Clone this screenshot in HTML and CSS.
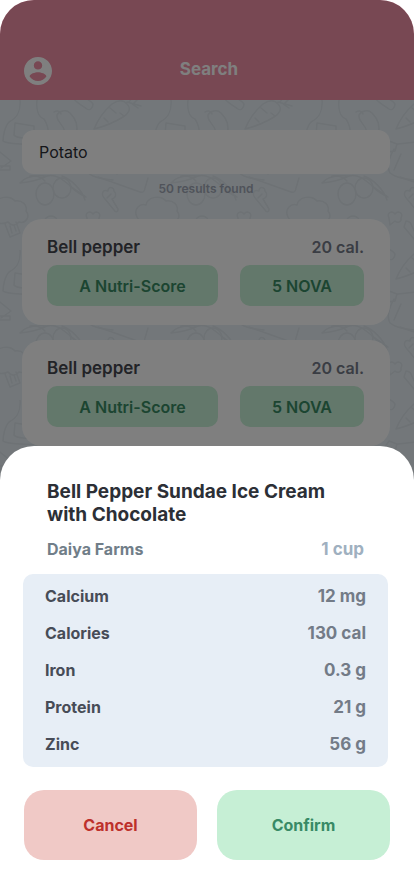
FILE: index.html
```html
<!DOCTYPE html>
<html lang="en">
<head>
<meta charset="utf-8">
<meta name="viewport" content="width=device-width, initial-scale=1">
<title>Search</title>
<link rel="stylesheet" href="styles.css">
</head>
<body>
<div class="screen">
  <header class="topbar">
    <a class="account" href="#" aria-label="Account">
      <svg viewBox="2 2 20 20" aria-hidden="true"><path fill="currentColor" d="M12 2C6.48 2 2 6.48 2 12s4.48 10 10 10 10-4.48 10-10S17.52 2 12 2zm0 3c1.66 0 3 1.34 3 3s-1.340 3-3 3-3-1.340-3-3 1.340-3 3-3zm0 14.200c-2.500 0-4.710-1.280-6-3.220.030-1.990 4-3.080 6-3.080 1.990 0 5.970 1.090 6 3.080-1.290 1.940-3.500 3.220-6 3.220z"/></svg>
    </a>
    <h1 class="title">Search</h1>
  </header>
  <main class="content">
    <svg class="doodles" aria-hidden="true">
      <defs>
        <pattern id="food" width="151" height="150" patternUnits="userSpaceOnUse">
          <g fill="none" stroke="#dce4ea" stroke-width="1.500" stroke-linecap="round" stroke-linejoin="round">
            <path d="M20 0c1 12-3 18-11 22-4 4-6 14-6 19 2 3 30 4 37 3 6 0 10-2 9-6-1-9-1-13-5-19-6-2-8-10-7-19M15 23l19 3v10c-2 4-18 2-20-1z"/>
            <path d="M54 12c3-2 6-1 7 2M57 15c2-4 9-6 13-2 6 6 9 12 6 21M57 15c-1 7 6 8 8 17"/>
            <path d="M72-4c2 6 10 9 15 13 3 2 6-1 6-5-2-4-8-5-11-9M72 146c2 6 10 9 15 13M93 154c-2-4-8-5-11-9"/>
            <path d="M94 29c5-12 11-19 18-25 6-4 11-5 15 0 5 5 1 10-4 13-8 5-17 9-29 12M110 8l6 5M104 18l4 4M120 13l4 3M127 2l14 4M129 2l4-5M134 3l5-5M132 4l6 4"/>
            <path d="M83 47l4-6 8 3-2 7-8 1zM92 49c-5 9-8 17-4 24 6 5 15 6 25 7M96 44l18-2M99 54l-7 16M113 44l4 30"/>
            <path d="M0 52l11 9-10 7M0 66h10v4H0M148 54l3-2M146 67h5"/>
            <path d="M20 83c5-7 16-8 27-7-8 4-17 6-27 7zM47 76c9-2 15 3 21 8 8 7 14 10 18 13-5-2-10-5-16-11M62 76c9 3 20 14 23 24M45 81c-5-5-10-6-15-5"/>
            <ellipse cx="45" cy="94" rx="9" ry="11"/><ellipse cx="62" cy="88" rx="9" ry="10"/>
            <path d="M98 77l42 15c3 1 5-1 5-4l3-10"/>
            <path d="M105 99c-5-5-2-10 3-8 0-5 6-4 6 0 3 3 2 7-2 8l6 10c0 4-3 3-4 1zM107 98l4-4"/>
            <path d="M-14 117c-4-8 3-14 9-12 2-9 15-10 20-4 7-1 13 4 11 10 5 6-1 13-7 11-4 5-9 3-11 0-7 3-13 1-15-3M5 124l5 13 10-4-4-11M10 126l2 7M14 125l2 6"/>
            <path d="M137 117c-4-8 3-14 9-12 2-9 15-10 20-4M137 117c3 6 10 5 14 3"/>
            <path d="M87 118c-3-5 3-8 6-4 3-4 9-1 6 4 1 5-4 5-6 3l-5 4zM104 121c7 0 5 8 12 16 2 4-2 5-4 2l-10-12z"/>
            <circle cx="51" cy="123" r="7"/>
          </g>
        </pattern>
      </defs>
      <rect width="100%" height="100%" fill="url(#food)"/>
    </svg>
    <form class="search">
      <input class="search-input" type="text" value="Potato" aria-label="Search food">
    </form>
    <p class="count">50 results found</p>
    <ul class="results">
      <li class="card">
        <div class="row"><span class="food">Bell pepper</span><span class="cal">20 cal.</span></div>
        <div class="badges"><span class="badge">A Nutri-Score</span><span class="badge">5 NOVA</span></div>
      </li>
      <li class="card">
        <div class="row"><span class="food">Bell pepper</span><span class="cal">20 cal.</span></div>
        <div class="badges"><span class="badge">A Nutri-Score</span><span class="badge">5 NOVA</span></div>
      </li>
    </ul>
  </main>
  <div class="scrim"></div>
  <section class="sheet" role="dialog" aria-labelledby="product">
    <h2 class="product" id="product">Bell Pepper Sundae Ice Cream with Chocolate</h2>
    <div class="row meta"><span class="brand">Daiya Farms</span><span class="serving">1 cup</span></div>
    <table class="facts">
      <tbody>
        <tr><th scope="row">Calcium</th><td>12 mg</td></tr>
        <tr><th scope="row">Calories</th><td>130 cal</td></tr>
        <tr><th scope="row">Iron</th><td>0.3 g</td></tr>
        <tr><th scope="row">Protein</th><td>21 g</td></tr>
        <tr><th scope="row">Zinc</th><td>56 g</td></tr>
      </tbody>
    </table>
    <div class="actions">
      <button class="btn cancel" type="button">Cancel</button>
      <button class="btn confirm" type="button">Confirm</button>
    </div>
  </section>
</div>
</body>
</html>
```
FILE: styles.css
```css
* { box-sizing: border-box; }

body {
  margin: 0;
  background: #fff;
  font-family: Inter, "Liberation Sans", sans-serif;
  font-size: 16px;
  line-height: 24px;
}

h1, h2, p, ul { margin: 0; padding: 0; }

.screen {
  position: relative;
  display: flex;
  flex-direction: column;
  min-height: 100vh;
  overflow: hidden;
  border-radius: 34px 34px 0 0;
}

.topbar {
  display: grid;
  grid-template-columns: 28px 1fr 28px;
  align-items: start;
  height: 100px;
  padding: 57px 24px 0;
  background: #f090a6;
  color: #fff;
}

.account { height: 28px; color: inherit; }
.account svg { display: block; width: 28px; height: 28px; }

.title {
  padding-left: 4px;
  font-size: 17px;
  line-height: 24px;
  font-weight: 700;
  text-align: center;
}

.content {
  position: relative;
  flex: 1;
  padding: 30px 24px 0 22px;
  background: #e6eff5;
}

.doodles {
  position: absolute;
  inset: 0;
  width: 100%;
  height: 100%;
}

.search, .count, .results { position: relative; }

.search-input {
  display: block;
  width: 100%;
  height: 44px;
  padding: 0 17px;
  border: 0;
  border-radius: 12px;
  background: #fff;
  color: #2c2f36;
  font: inherit;
}

.count {
  padding: 5px 0 20px;
  font-size: 12px;
  line-height: 20px;
  font-weight: 600;
  text-align: center;
  color: #a0a7b5;
}

.results {
  display: grid;
  gap: 15px;
  list-style: none;
}

.card {
  padding: 16px 26px 19px 25px;
  border-radius: 20px;
  background: #fff;
}

.row {
  display: flex;
  justify-content: space-between;
  font-weight: 600;
}

.food { color: #45474f; font-size: 17px; }
.cal { color: #747a88; }

.badges {
  display: grid;
  grid-template-columns: 171fr 124fr;
  gap: 22px;
  margin-top: 6px;
}

.badge {
  height: 41px;
  border-radius: 10px;
  background: #c6f0d6;
  color: #388a63;
  font-weight: 600;
  line-height: 43px;
  text-align: center;
}

.scrim {
  position: absolute;
  inset: 0;
  background: rgba(0, 0, 0, 0.5);
}

.sheet {
  position: absolute;
  right: 0;
  bottom: 0;
  left: 0;
  padding: 34px 24px 36px;
  border-radius: 34px 34px 0 0;
  background: #fff;
}

.product {
  padding: 0 40px 0 23px;
  font-size: 19px;
  line-height: 23px;
  font-weight: 700;
  color: #2c2f36;
}

.meta {
  padding: 11px 26px 13px 23px;
  font-weight: 700;
}

.brand { color: #717e89; }
.serving { color: #9fb0c0; font-size: 17px; }

.facts {
  display: block;
  margin: 0 2px 0 -1px;
  padding: 4px 22px;
  border-radius: 10px;
  background: #e7eef6;
}

.facts tbody { display: block; }

.facts tr {
  display: flex;
  justify-content: space-between;
  line-height: 37px;
}

.facts th, .facts td {
  padding: 0;
  font-weight: 700;
}

.facts th { color: #474c57; }
.facts td { color: #737b87; font-size: 17px; }

.actions {
  display: grid;
  grid-template-columns: 1fr 1fr;
  gap: 20px;
  margin-top: 23px;
}

.btn {
  height: 70px;
  border: 0;
  border-radius: 20px;
  font: inherit;
  font-weight: 700;
}

.cancel { background: #f0c9c6; color: #bd302b; }
.confirm { background: #c6efd5; color: #388a66; }
```
